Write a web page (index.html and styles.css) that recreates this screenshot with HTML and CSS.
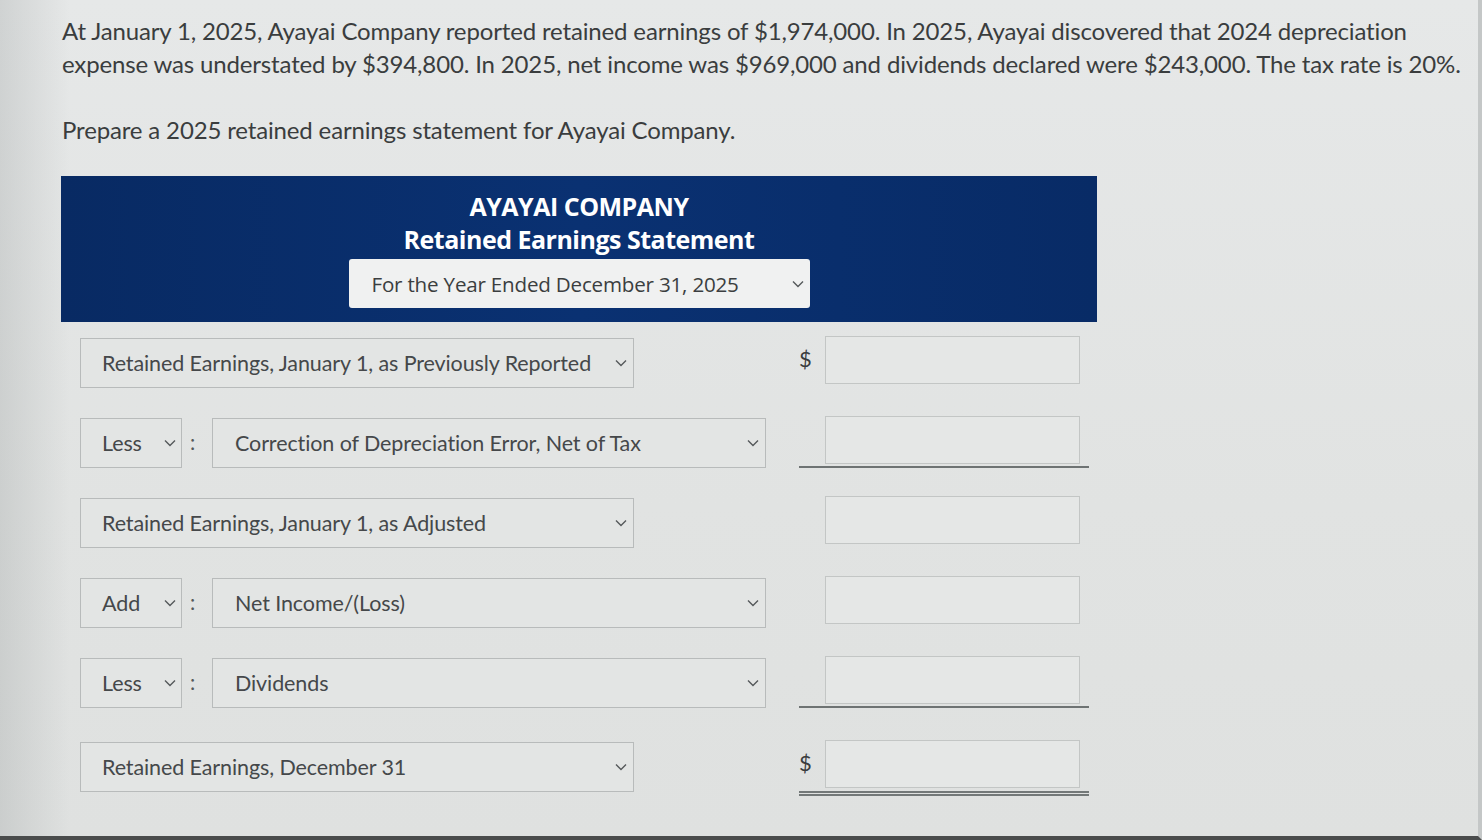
FILE: index.html
```html
<!DOCTYPE html>
<html lang="en">
<head>
<meta charset="utf-8">
<title>Ayayai Company – Retained Earnings Statement</title>
<link rel="stylesheet" href="styles.css">
</head>
<body>
<div class="page">
  <p class="problem">At January 1, 2025, Ayayai Company reported retained earnings of $1,974,000. In 2025, Ayayai discovered that 2024 depreciation expense was understated by $394,800. In 2025, net income was $969,000 and dividends declared were $243,000. The tax rate is 20%.</p>
  <p class="prompt">Prepare a 2025 retained earnings statement for Ayayai Company.</p>

  <div class="statement">
    <div class="stmt-head">
      <div class="co-name">AYAYAI COMPANY</div>
      <div class="stmt-title">Retained Earnings Statement</div>
      <div class="period-select">
        <span>For the Year Ended December 31, 2025</span>
        <svg class="chev" viewBox="0 0 12 8" width="12" height="8"><polyline points="1,1.5 6,6.5 11,1.5"/></svg>
      </div>
    </div>

    <div class="stmt-body">
      <div class="row">
        <div class="left">
          <div class="sel wide"><span>Retained Earnings, January 1, as Previously Reported</span><svg class="chev" viewBox="0 0 12 8" width="12" height="8"><polyline points="1,1.5 6,6.5 11,1.5"/></svg></div>
        </div>
        <div class="amt"><span class="cur">$</span><input class="num" type="text"></div>
      </div>

      <div class="row">
        <div class="left">
          <div class="sel op"><span>Less</span><svg class="chev" viewBox="0 0 12 8" width="12" height="8"><polyline points="1,1.5 6,6.5 11,1.5"/></svg></div>
          <span class="colon">:</span>
          <div class="sel item"><span>Correction of Depreciation Error, Net of Tax</span><svg class="chev" viewBox="0 0 12 8" width="12" height="8"><polyline points="1,1.5 6,6.5 11,1.5"/></svg></div>
        </div>
        <div class="amt under"><span class="cur"></span><input class="num" type="text"></div>
      </div>

      <div class="row">
        <div class="left">
          <div class="sel wide"><span>Retained Earnings, January 1, as Adjusted</span><svg class="chev" viewBox="0 0 12 8" width="12" height="8"><polyline points="1,1.5 6,6.5 11,1.5"/></svg></div>
        </div>
        <div class="amt"><span class="cur"></span><input class="num" type="text"></div>
      </div>

      <div class="row">
        <div class="left">
          <div class="sel op"><span>Add</span><svg class="chev" viewBox="0 0 12 8" width="12" height="8"><polyline points="1,1.5 6,6.5 11,1.5"/></svg></div>
          <span class="colon">:</span>
          <div class="sel item"><span>Net Income/(Loss)</span><svg class="chev" viewBox="0 0 12 8" width="12" height="8"><polyline points="1,1.5 6,6.5 11,1.5"/></svg></div>
        </div>
        <div class="amt"><span class="cur"></span><input class="num" type="text"></div>
      </div>

      <div class="row">
        <div class="left">
          <div class="sel op"><span>Less</span><svg class="chev" viewBox="0 0 12 8" width="12" height="8"><polyline points="1,1.5 6,6.5 11,1.5"/></svg></div>
          <span class="colon">:</span>
          <div class="sel item"><span>Dividends</span><svg class="chev" viewBox="0 0 12 8" width="12" height="8"><polyline points="1,1.5 6,6.5 11,1.5"/></svg></div>
        </div>
        <div class="amt under"><span class="cur"></span><input class="num" type="text"></div>
      </div>

      <div class="row last">
        <div class="left">
          <div class="sel wide"><span>Retained Earnings, December 31</span><svg class="chev" viewBox="0 0 12 8" width="12" height="8"><polyline points="1,1.5 6,6.5 11,1.5"/></svg></div>
        </div>
        <div class="amt double"><span class="cur">$</span><input class="num" type="text"></div>
      </div>
    </div>
  </div>
</div>
</body>
</html>
```

FILE: styles.css
```css
* { box-sizing: border-box; }

html, body {
  margin: 0;
  height: 100%;
}

body {
  background:
    linear-gradient(90deg, rgba(150,155,155,0.28) 0px, rgba(150,155,155,0) 70px),
    linear-gradient(180deg, #e6e8e8 0%, #e1e3e2 60%, #dfe1e0 100%);
  font-family: Lato, "Liberation Sans", sans-serif;
  color: #3a3d3e;
  overflow: hidden;
  border-right: 4px solid #c4c7c7;
  border-bottom: 4px solid #4a4c4c;
}

.page {
  padding: 14px 0 0 62px;
}

.problem {
  margin: 0;
  width: 1405px;
  font-size: 24px;
  line-height: 33px;
  letter-spacing: -0.15px;
}

.prompt {
  margin: 33px 0 0;
  font-size: 24px;
  line-height: 33px;
  letter-spacing: -0.15px;
}

.statement {
  margin: 30px 0 0 -1px;
  width: 1036px;
}

.stmt-head {
  background: linear-gradient(90deg, #082a63 0%, #0a3172 50%, #082b66 100%);
  height: 146px;
  padding-top: 14px;
  display: flex;
  flex-direction: column;
  align-items: center;
  color: #fff;
  font-family: "Open Sans", "DejaVu Sans", sans-serif;
  font-weight: 700;
  font-size: 25px;
  letter-spacing: -0.5px;
}

.co-name, .stmt-title {
  line-height: 33px;
}

.period-select {
  margin-top: 3px;
  width: 461px;
  height: 49px;
  background: #f0f1f1;
  border-radius: 3px;
  display: flex;
  align-items: center;
  justify-content: space-between;
  padding: 0 6px 0 23px;
  color: #3b3e40;
  font-weight: 400;
  font-size: 20.6px;
  letter-spacing: -0.2px;
}

.chev {
  fill: none;
  stroke: #55595b;
  stroke-width: 1.4;
  flex: none;
}

.stmt-body {
  padding: 14px 0 0 19px;
}

.row {
  display: flex;
  align-items: flex-start;
  height: 80px;
}

.row.last {
  margin-top: 4px;
}

.left {
  width: 719px;
  display: flex;
  align-items: center;
  padding-top: 2px;
}

.sel {
  height: 50px;
  border: 1.5px solid #b8bbbb;
  background: #e3e5e4;
  display: flex;
  align-items: center;
  justify-content: space-between;
  font-size: 21.5px;
  color: #45484a;
  letter-spacing: -0.1px;
  white-space: nowrap;
}

.sel.wide {
  width: 554px;
  padding: 0 6px 0 21px;
}

.sel.op {
  width: 102px;
  padding: 0 5px 0 21px;
}

.sel.item {
  width: 554px;
  padding: 0 6px 0 22px;
}

.colon {
  width: 30px;
  padding-left: 8px;
  font-size: 21px;
  color: #55595b;
  margin-top: -4px;
}

.amt {
  display: flex;
  align-items: center;
  width: 290px;
  padding: 0 8px 2px 0;
}

.cur {
  width: 26px;
  font-size: 22px;
  color: #3a3d3e;
  margin-top: -4px;
}

.num {
  width: 255px;
  height: 48px;
  margin: 0;
  border: 1.5px solid #c3c6c5;
  background: #e5e7e6;
  border-radius: 0;
  outline: none;
}

.amt.under {
  border-bottom: 2px solid #6e7373;
}

.amt.double {
  padding-bottom: 3px;
  border-bottom: 5px double #737878;
}
```
